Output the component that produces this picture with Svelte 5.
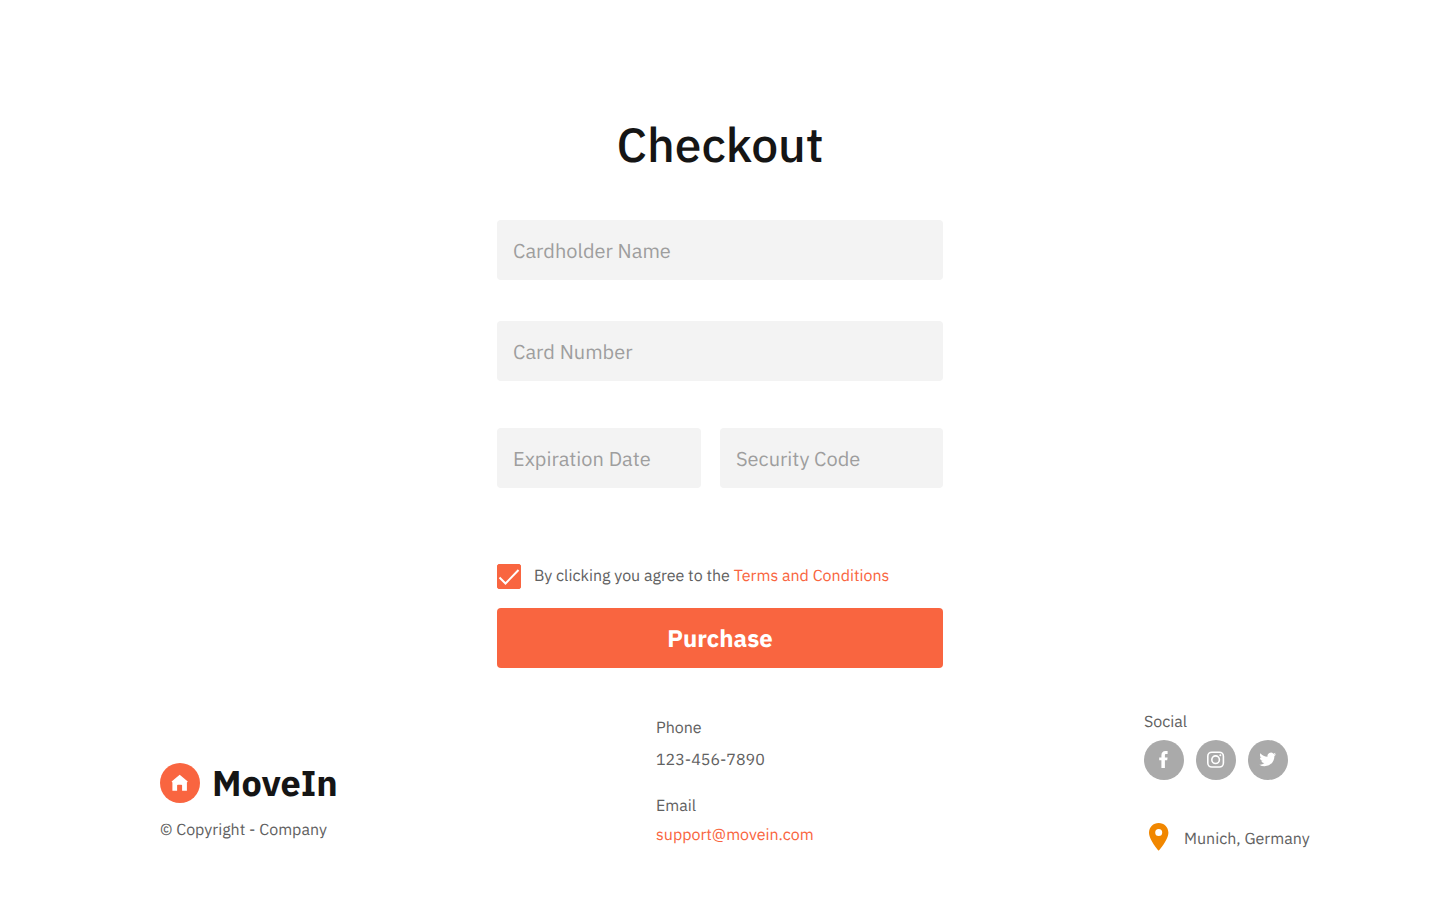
<script>
  let name = $state('');
  let number = $state('');
  let expiry = $state('');
  let code = $state('');
  let agreed = $state(true);
</script>

<div class="page">
  <main>
    <h1>Checkout</h1>
    <form onsubmit={(event) => event.preventDefault()}>
      <input class="field" type="text" placeholder="Cardholder Name" aria-label="Cardholder Name" bind:value={name} />
      <input class="field number" type="text" placeholder="Card Number" aria-label="Card Number" bind:value={number} />
      <div class="pair">
        <input class="field" type="text" placeholder="Expiration Date" aria-label="Expiration Date" bind:value={expiry} />
        <input class="field" type="text" placeholder="Security Code" aria-label="Security Code" bind:value={code} />
      </div>
      <div class="consent">
        <span class="tick">
          <input id="agree" type="checkbox" bind:checked={agreed} />
          {#if agreed}
            <svg viewBox="0 0 24 25" aria-hidden="true">
              <path d="M2.5 13.5 8.5 19.5 21.5 6" fill="none" stroke="#fff" stroke-width="2" />
            </svg>
          {/if}
        </span>
        <label for="agree">By clicking you agree to the <a href="#terms">Terms and Conditions</a></label>
      </div>
      <button type="submit">Purchase</button>
    </form>
  </main>

  <footer>
    <div class="brand">
      <a class="logo" href="#home">
        <svg width="40" height="40" viewBox="0 0 40 40" aria-hidden="true">
          <circle cx="20" cy="20" r="20" fill="#f96540" />
          <path d="M19.7 11.8 27.8 18.4 26.9 19.6 26.9 27.8H22.1V22.6Q22.1 21.8 21.3 21.8H17.9Q17.1 21.8 17.1 22.6V27.8H12.4V19.6L11.6 18.4Z" fill="#fff" />
        </svg>
        <span>MoveIn</span>
      </a>
      <p>© Copyright - Company</p>
    </div>

    <div class="contact">
      <p>Phone</p>
      <p class="phone">123-456-7890</p>
      <p>Email</p>
      <p class="email"><a href="mailto:support@movein.com">support@movein.com</a></p>
    </div>

    <div class="social">
      <p>Social</p>
      <div class="icons">
        <a href="#facebook" aria-label="Facebook">
          <svg viewBox="0 0 40 40" aria-hidden="true">
            <path d="M17.4 28V20.3H15.2V17.4H17.4V15.5C17.4 12.7 18.9 11.1 21.5 11.1H23.6V14.1H22.2C21.2 14.1 20.9 14.6 20.9 15.5V17.4H23.6L23.2 20.3H20.9V28Z" fill="#fff" />
          </svg>
        </a>
        <a href="#instagram" aria-label="Instagram">
          <svg viewBox="0 0 40 40" aria-hidden="true">
            <rect x="11.8" y="12.2" width="15.6" height="14.8" rx="4" fill="none" stroke="#fff" stroke-width="1.6" />
            <circle cx="19.6" cy="19.7" r="3.8" fill="none" stroke="#fff" stroke-width="1.6" />
            <circle cx="24.3" cy="15.3" r="1" fill="#fff" />
          </svg>
        </a>
        <a href="#twitter" aria-label="Twitter">
          <svg viewBox="0 0 40 40" aria-hidden="true">
            <path transform="translate(11.3 11) scale(.7)" d="M23.95 4.57a10 10 0 0 1-2.82.77 4.96 4.96 0 0 0 2.16-2.72c-.95.55-2 .95-3.13 1.18a4.92 4.92 0 0 0-8.38 4.48C7.69 8.1 4.07 6.13 1.64 3.16a4.82 4.82 0 0 0-.67 2.48c0 1.71.87 3.21 2.19 4.1a4.9 4.9 0 0 1-2.23-.62v.06a4.92 4.92 0 0 0 3.95 4.83 5 5 0 0 1-2.21.08 4.94 4.94 0 0 0 4.6 3.42A9.87 9.87 0 0 1 0 19.54a14 14 0 0 0 7.55 2.21c9.05 0 14-7.5 14-13.98 0-.21 0-.42-.02-.63a9.94 9.94 0 0 0 2.46-2.55z" fill="#fff" />
          </svg>
        </a>
      </div>
      <div class="place">
        <svg width="20" height="28" viewBox="0 0 20 28" aria-hidden="true">
          <path fill-rule="evenodd" d="M9.7 0C4.3 0 0 4.2 0 9.6 0 17 9.7 27.8 9.7 27.8S19.4 17 19.4 9.6C19.4 4.2 15.1 0 9.7 0ZM9.7 6.1A3.5 3.5 0 1 1 9.7 13.1 3.5 3.5 0 0 1 9.7 6.1Z" fill="#f18700" />
        </svg>
        <span>Munich, Germany</span>
      </div>
    </div>
  </footer>
</div>

<style>
  :global(body) {
    margin: 0;
    background: #fff;
  }

  .page {
    color: #616161;
    font: 16px/20px "IBM Plex Sans", Roboto, "Noto Sans", sans-serif;
    text-rendering: geometricPrecision;
    padding: 117px 0 48px;
  }

  p {
    margin: 0;
  }

  a {
    color: #f96540;
    text-decoration: none;
  }

  main {
    box-sizing: border-box;
    width: 100%;
    max-width: 446px;
    margin: 0 auto;
  }

  h1 {
    margin: 0 0 47px;
    color: #151515;
    font-size: 48px;
    font-weight: 500;
    line-height: 56px;
    text-align: center;
  }

  form {
    display: flex;
    flex-direction: column;
  }

  .field {
    box-sizing: border-box;
    width: 100%;
    height: 60px;
    padding: 0 16px;
    border: 0;
    border-radius: 4px;
    background: #f3f3f3;
    color: #151515;
    font: inherit;
    font-size: 20px;
    text-rendering: inherit;
  }

  .field::placeholder {
    color: #9e9e9e;
    opacity: 1;
  }

  .number {
    margin-top: 41px;
  }

  .pair {
    display: grid;
    grid-template-columns: 204fr 223fr;
    gap: 19px;
    margin-top: 47px;
  }

  .consent {
    display: flex;
    align-items: flex-start;
    gap: 13px;
    margin: 76px 0 19px;
  }

  .tick {
    display: grid;
    width: 24px;
    height: 25px;
  }

  .tick > * {
    grid-area: 1 / 1;
    width: 24px;
    height: 25px;
  }

  .tick input {
    appearance: none;
    margin: 0;
    border: 1px solid #f96540;
    border-radius: 2px;
  }

  .tick input:checked {
    background: #f96540;
  }

  .tick svg {
    pointer-events: none;
  }

  .consent label {
    line-height: 24px;
  }

  button {
    height: 60px;
    border: 0;
    border-radius: 4px;
    background: #f96540;
    color: #fff;
    font: inherit;
    font-size: 24px;
    font-weight: 700;
    text-rendering: inherit;
    cursor: pointer;
  }

  footer {
    display: grid;
    grid-template-columns: 496fr 488fr 164px;
    margin-top: 44px;
    padding: 0 132px 0 160px;
  }

  .brand {
    padding-top: 51px;
  }

  .logo {
    display: flex;
    align-items: center;
    gap: 12px;
    margin-bottom: 17px;
    color: #151515;
    font-size: 36px;
    font-weight: 700;
    line-height: 40px;
  }

  .contact {
    padding-top: 6px;
  }

  .phone {
    margin: 12px 0 26px;
  }

  .email {
    margin-top: 9px;
  }

  .icons {
    display: flex;
    gap: 12px;
    margin: 8px 0 43px;
  }

  .icons a {
    width: 40px;
    height: 40px;
    border-radius: 50%;
    background: #aaa;
  }

  .icons svg {
    display: block;
  }

  .place {
    display: flex;
    align-items: center;
    gap: 15px;
    padding-left: 5px;
    white-space: nowrap;
  }

  .place svg {
    flex: none;
  }

  .place span {
    padding-top: 4px;
  }
</style>
